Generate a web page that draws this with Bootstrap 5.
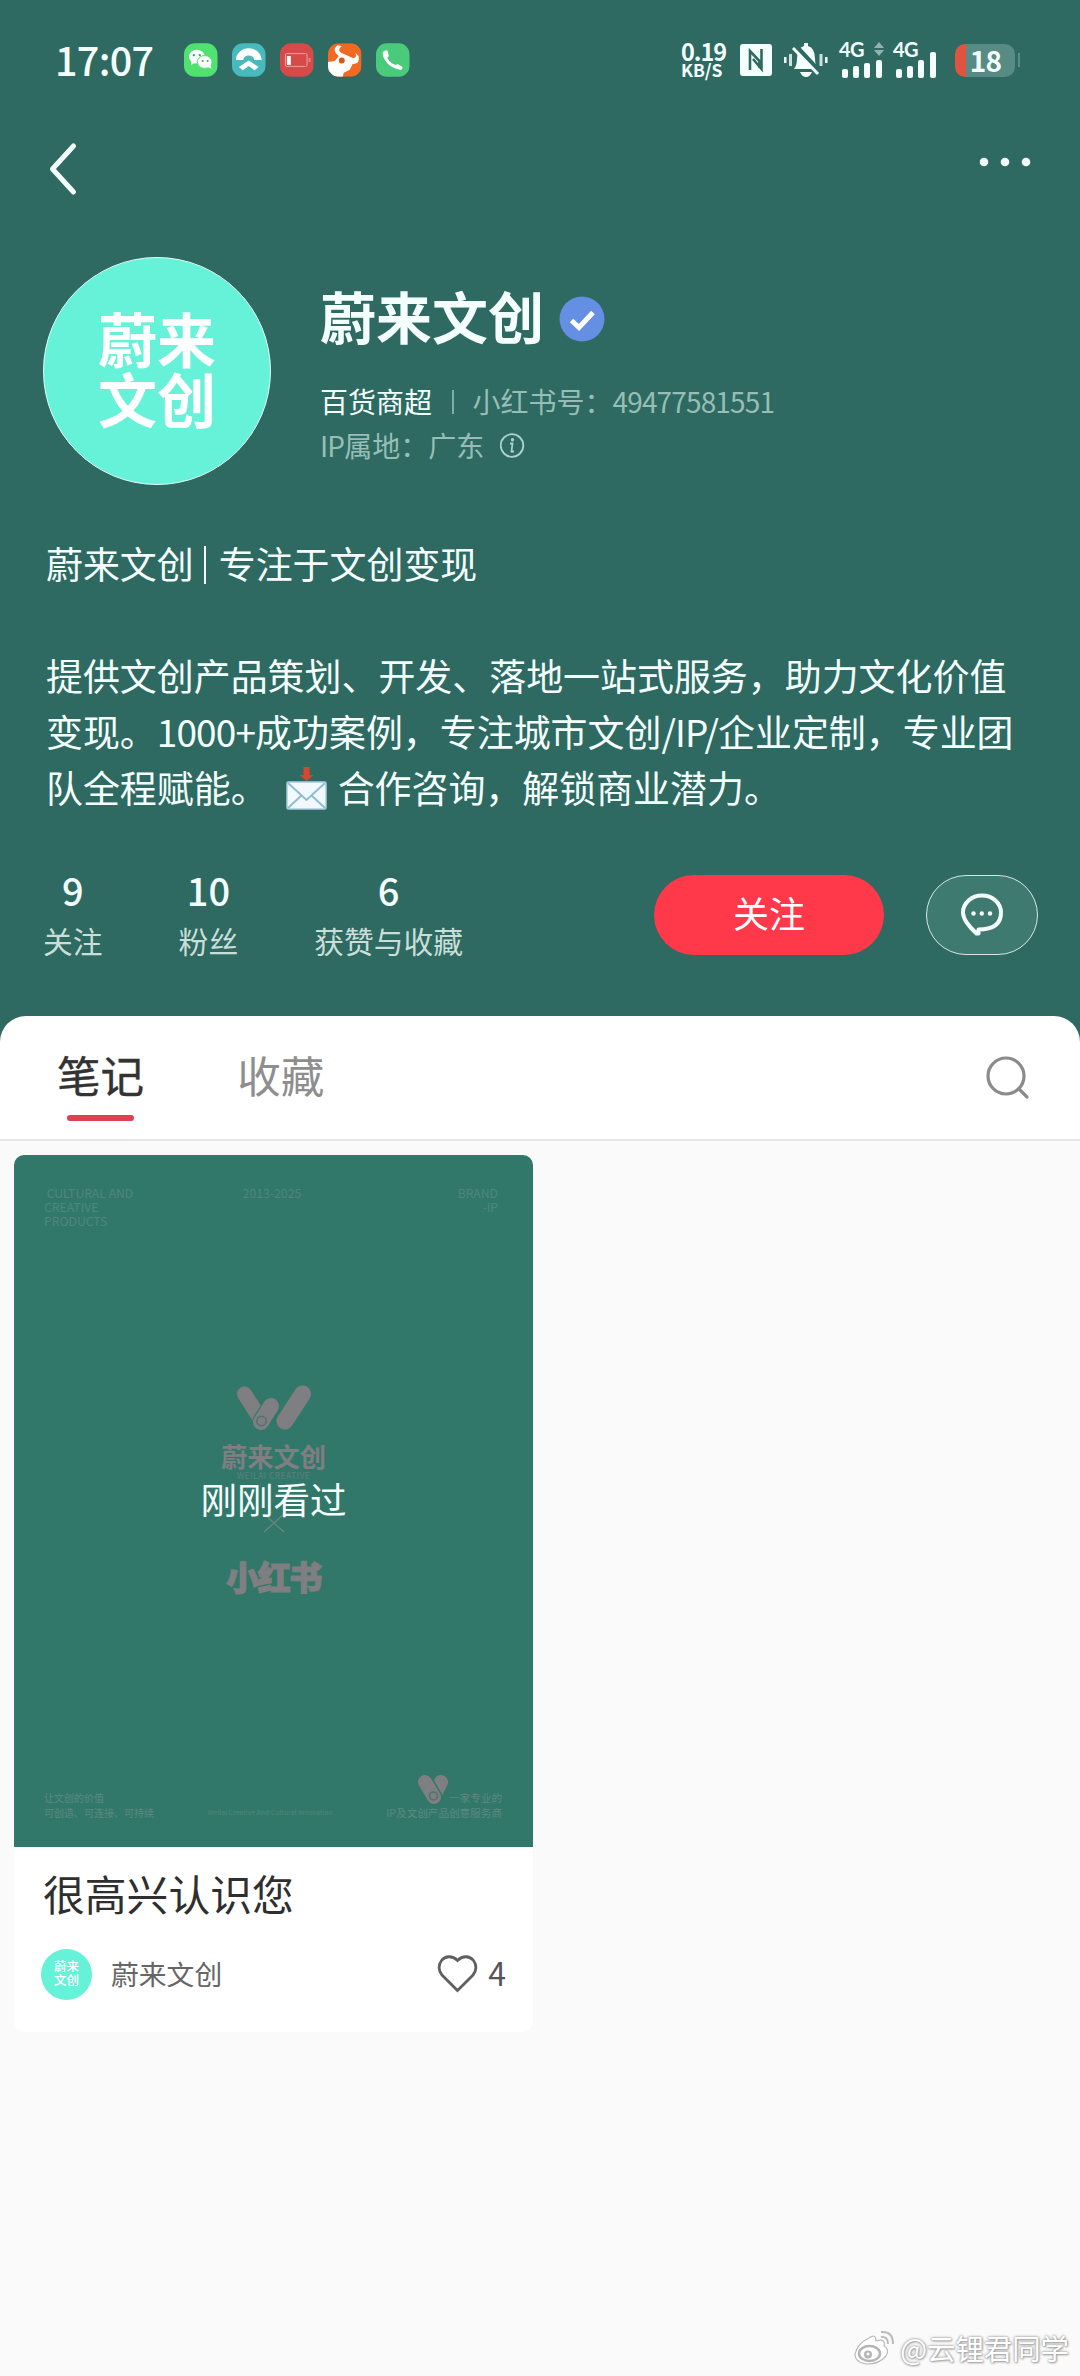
<!DOCTYPE html>
<html lang="zh-CN">
<head>
<meta charset="utf-8">
<meta name="viewport" content="width=device-width, initial-scale=1">
<title>蔚来文创</title>
<link href="https://cdn.jsdelivr.net/npm/bootstrap@5.3.0/dist/css/bootstrap.min.css" rel="stylesheet">
<style>
body{font-family:"Noto Sans CJK SC",sans-serif;background:#fbfafb;color:#333;min-height:2376px;position:relative}
svg{display:block;flex:none}
.hero{background:#2e6a61;color:#f4fffd;height:1046px}
.statusbar{height:120px;padding:0 60px 0 55px}
.clock{font-size:39.5px;font-weight:500;line-height:40px;width:129px;white-space:nowrap;letter-spacing:-.7px;padding-bottom:2px}
.appicons{gap:14.5px}
.rate{font-size:23.5px;font-weight:700;line-height:20px;letter-spacing:-1px;width:46px;margin-right:13px}
.rate span{display:block;font-size:17.5px;line-height:18px;letter-spacing:-.1px}
.bell{margin:0 6px 0 7px}
.sig{width:46px;height:36px;font-family:Lato,"Noto Sans CJK SC",sans-serif;font-weight:700;font-size:20px;line-height:14px;letter-spacing:-.5px}
.batt{width:60px;height:33px;border-radius:10px;background:linear-gradient(90deg,#df5340 11px,#588b83 11px);font-weight:700;font-size:28px;line-height:32px;letter-spacing:-.8px;padding-left:1px}
.nub{width:2px;height:14px;background:#588b83;margin-left:3px}
.topnav{height:97px;padding:22px 49px 0 48px}
.profile{padding:40px 43px 0;height:268px}
.avatar{border-radius:50%;background:#66f1d9;color:#fff;font-weight:900;text-align:center;flex:none}
.avatar-lg{width:228px;height:228px;border:1.5px solid #e4fffa;font-size:59px;line-height:60px;padding-top:50px;font-weight:700}
.avatar-sm{width:51px;height:51px;font-size:12.5px;line-height:14px;padding-top:10.5px;font-weight:500}
.idblock{margin-left:49px}
.uname{font-size:56px;font-weight:700;line-height:60px;margin:0}
.verified{margin:7px 0 0 15px}
.meta{font-size:28px;line-height:43.5px;color:#96beb6;margin-top:35px}
.meta .cat{color:#f4fffd}
.vbar{width:1.5px;height:24px;background:#7fada5;margin:0 19px 0 20px}
.uid{letter-spacing:-.85px}
.bio{font-size:36.95px;line-height:56px;padding:50px 46px 0;height:390px;white-space:nowrap}
.bio .vbar2{display:inline-block;width:2px;height:38px;background:#f4fffd;margin:0 13px 0 10px;vertical-align:-5px}
.nums{letter-spacing:-.85px}
.mail{display:inline-block;vertical-align:-7px;margin:0 11px 0 18px}
.statrow{height:80px;padding:0 42px 0 43px}
.stats{gap:76px}
.stat{text-align:center;font-size:29.8px;line-height:40px;color:#c9ded9}
.stat b{display:block;font-weight:500;font-size:38px;line-height:40px;color:#f4fffd;margin-top:-5px;margin-bottom:10px}
.follow{width:230px;height:80px;border-radius:40px;background:#ff384a;color:#fff;font-size:36px;border:0;padding:0 0 6px;margin-right:42px}
.msg{width:112px;height:80px;border-radius:40px;border:1.5px solid #d5e8e4;background:#3f7a70;padding:0}
.sheet{background:#fff;border-radius:26px 26px 0 0;margin-top:-30px;height:125px;border-bottom:2px solid #e6e6e6;padding:0 49px 0 57px;position:relative}
.tabitem{font-size:43.6px;line-height:60px;color:#8e8e8e;height:80px;margin-top:28px;text-align:center}
.tabitem.on{color:#333;margin-right:93px;-webkit-text-stroke:.4px #333}
.tabitem.on::after{content:"";display:block;width:67px;height:6px;border-radius:3px;background:#e0404f;margin:11px auto 0}
.note{width:519px;margin:14px 0 0 14px;border:0;border-radius:10px;overflow:hidden;background:#fff}
.cover{height:692px;background:#31786b;color:#4f877c;font-size:12.2px;line-height:14px;padding:31px 35px 27px 30px;position:relative}
.coverhead>div{flex:1 1 0}
.coverhead>.art-year{position:relative;left:1px}
.brandmark{color:#7f7e81;padding-top:157px;margin-right:-5px}
.brandname{font-weight:700;font-size:26.3px;line-height:26px;margin-top:12px}
.brandsub{font-size:8.4px;line-height:9px;letter-spacing:.5px;color:#5c817b;margin-top:2px}
.xmark{margin-top:33px}
.xhs{font-weight:900;font-size:33px;line-height:40px;letter-spacing:-1.5px;margin-top:23px;-webkit-text-stroke:1.2px #7f7e81}
.seen{position:absolute;left:0;right:0;top:324px;text-align:center;color:#f6fffe;font-size:36.5px;line-height:40px}
.foot{font-size:10.6px;line-height:15px;color:#5d8981;margin-right:-4px}
.foot-l{font-size:10px}
.foot-c{font-size:6.8px;letter-spacing:.05px;color:#548378}
.ntitle{font-size:41.8px;line-height:60px;color:#2f2f2f;margin:16px 0 0 29px}
.nfoot{padding:0 27px 0 27px;height:52px;margin-top:25px}
.nname{font-size:27.8px;color:#666;margin:-2px 0 0 19px;line-height:40px}
.likes{font-size:32px;color:#555;line-height:40px;margin:-4px 0 0 10px}
.wm{position:absolute;right:11px;bottom:10px;color:#fff;font-size:28.4px;line-height:34px;text-shadow:0 0 2px #999,0 0 3px #aaa,1px 1px 2px #aaa}
</style>
</head>
<body>
<header class="hero">
  <div class="statusbar d-flex align-items-center">
    <div class="clock">17:07</div>
    <div class="appicons d-flex">
      <svg width="33.5" height="34" viewBox="0 0 34 34"><rect width="34" height="34" rx="11" fill="#50e170"/><ellipse cx="13" cy="13.500" rx="8" ry="7" fill="#fff"/><path d="M8 18l-1 4 4-2z" fill="#fff"/><ellipse cx="21" cy="19" rx="7.500" ry="6.500" fill="#fff" stroke="#50e170"/><path d="M24 24l4 2-1-4z" fill="#fff"/><g fill="#35a955"><circle cx="10" cy="12" r="1.200"/><circle cx="16" cy="12" r="1.200"/><circle cx="19" cy="18" r="1"/><circle cx="24" cy="18" r="1"/></g></svg>
      <svg width="33.5" height="34" viewBox="0 0 34 34"><rect width="34" height="34" rx="11" fill="#48b9bd"/><path d="M4 17a13 12 0 0 1 26 0h-7.500a5.500 4.500 0 0 0-11 0z" fill="#fff"/><path d="M17 17.500L27 24l-4 3.500-6-4.500-6 4.500L7 24z" fill="#fff"/></svg>
      <svg width="33.5" height="34" viewBox="0 0 34 34"><rect width="34" height="34" rx="11" fill="#d64a4a"/><rect x="5.500" y="10.500" width="22" height="13" rx="1.500" fill="none" stroke="#f4a09a"/><rect x="7" y="13" width="4" height="9" fill="#fff"/><rect x="29" y="15" width="2" height="4" fill="#e98782"/></svg>
      <svg width="33.5" height="34" viewBox="0 0 34 34"><defs><clipPath id="oxclip"><rect width="34" height="34" rx="11"/></clipPath></defs><g clip-path="url(#oxclip)"><rect width="34" height="34" fill="#f26a22"/><path d="M0 19L7 18 11 13C6 9 5 5 10 2L14 3C10 6 11 8 14 10L25 15C28 15 29 14 28 10L31 13C32 19 30 21 25 21L22 27 16 30 15 34H0z" fill="#fff"/><circle cx="14" cy="17.500" r="3" fill="#d65716"/></g></svg>
      <svg width="33.5" height="34" viewBox="0 0 34 34"><rect width="34" height="34" rx="11" fill="#4acb7b"/><path d="M7 9Q10 6 12 8L13 13 11.500 15Q15 21 20 22L22 21 27 24Q27 27 24 27Q14 25 9 17Q6 12 7 9z" fill="#fff"/></svg>
    </div>
    <div class="ms-auto d-flex align-items-center">
      <div class="rate">0.19<span>KB/S</span></div>
      <svg width="32" height="32" viewBox="0 0 32 32"><rect width="32" height="32" rx="3" fill="#f4fffd"/><path d="M10 26V7L19.500 17V24M21.500 5v20L13 15" fill="none" stroke="#2e6a61" stroke-width="2.600"/></svg>
      <svg class="bell" width="54" height="36" viewBox="-5 0 54 36"><g fill="#f4fffd"><path d="M10 27Q13 23 13 17Q13 6 20 4V1h4V4Q31 6 31 17Q31 23 34 27z"/><path d="M16 30h12q-2 5-6 5t-6-5z"/><rect x="0" y="15" width="2.500" height="6"/><rect x="5" y="12" width="3" height="12" opacity=".8"/><rect x="35.500" y="12" width="3" height="12" opacity=".8"/><rect x="41" y="15" width="2.500" height="6"/></g><path d="M12 5L36 31" stroke="#2e6a61" stroke-width="6"/><path d="M9 6L34 32" stroke="#f4fffd" stroke-width="3"/></svg>
      <div class="sig position-relative">4G
        <svg class="position-absolute top-0 end-0" width="12" height="14" viewBox="1 0 12 14"><path d="M2 6L7 0l5 6zM2 8l5 6 5-6z" fill="#8db5ae"/></svg>
        <svg class="position-absolute bottom-0 start-0" width="44" height="20" viewBox="-2 0 44 20" fill="#f4fffd"><rect x="1" y="11" width="6" height="9" rx="2"/><rect x="12" y="8" width="6" height="12" rx="2"/><rect x="23" y="5" width="6" height="15" rx="2"/><rect x="35" y="2" width="6" height="18" rx="2"/></svg>
      </div>
      <div class="sig position-relative ms-2">4G
        <svg class="position-absolute bottom-0 start-0" width="46" height="28" viewBox="-2 0 46 28" fill="#f4fffd"><rect x="1" y="19" width="6" height="9" rx="2"/><rect x="12" y="16" width="6" height="12" rx="2"/><rect x="23" y="10" width="6" height="18" rx="2"/><rect x="35" y="2" width="6" height="26" rx="2"/></svg>
      </div>
      <div class="batt ms-3 text-center">18</div><div class="nub"></div>
    </div>
  </div>
  <div class="topnav d-flex justify-content-between">
    <svg width="30" height="54" viewBox="0 0 30 54"><path d="M25.500 4L4.500 27 25.500 50" fill="none" stroke="#f4fffd" stroke-width="5" stroke-linecap="round" stroke-linejoin="round"/></svg>
    <svg width="54" height="40" viewBox="0 0 54 40" fill="#f4fffd"><circle cx="7" cy="20" r="4.300"/><circle cx="28" cy="20" r="4.300"/><circle cx="49" cy="20" r="4.300"/></svg>
  </div>
  <div class="profile d-flex">
    <div class="avatar avatar-lg">蔚来<br>文创</div>
    <div class="idblock pt-4">
      <div class="d-flex align-items-center pt-1">
        <h1 class="uname">蔚来文创</h1>
        <svg class="verified" width="46" height="46" viewBox="0 0 46 46"><circle cx="23" cy="23" r="22.500" fill="#658fe2"/><path d="M12.500 24.500L20 31.500 34 16.500" fill="none" stroke="#fff" stroke-width="5"/></svg>
      </div>
      <div class="meta">
        <div class="d-flex align-items-center"><span class="cat">百货商超</span><span class="vbar"></span><span>小红书号：</span><span class="uid">49477581551</span></div>
        <div class="d-flex align-items-center"><span class="uid">IP</span><span>属地：广东</span>
          <svg class="ms-3" width="26" height="26" viewBox="2.500 -1 26 26" fill="none" stroke="#a9d3cb" stroke-width="1.800"><circle cx="14.500" cy="12.500" r="11.300"/><path d="M12.500 10.500h2.500l-1 8h2.500"/><circle cx="15" cy="6.800" r=".8" fill="#a9d3cb"/></svg></div>
      </div>
    </div>
  </div>
  <div class="bio">蔚来文创<span class="vbar2"></span>专注于文创变现<br><br>提供文创产品策划、开发、落地一站式服务，助力文化价值<br>变现。<span class="nums">1000+</span>成功案例，专注城市文创<span class="nums">/IP/</span>企业定制，专业团<br>队全程赋能。<svg class="mail" width="41" height="43" viewBox="0 0 41 43"><rect x="1" y="15" width="39" height="27" rx="1.500" fill="#f1f9fe" stroke="#a9cde4" stroke-width="1.500"/><path d="M2 41L16 28M39 41L25 28M2 16L20.500 33 39 16" fill="none" stroke="#91bcd6" stroke-width="2"/><path d="M17.500 0h6v8h4L20.500 14 13.500 8h4z" fill="#d9452f"/></svg>合作咨询，解锁商业潜力。</div>
  <div class="statrow d-flex">
    <div class="stats d-flex">
      <div class="stat"><b>9</b>关注</div>
      <div class="stat"><b>10</b>粉丝</div>
      <div class="stat"><b>6</b>获赞与收藏</div>
    </div>
    <button class="btn follow ms-auto">关注</button>
    <button class="btn msg d-flex align-items-center justify-content-center"><svg width="44" height="44" viewBox="0 0 44 44"><path d="M18.500 40.500H16.500Q3 28 3 19.500A19 17 0 0 1 41 19.500Q41 36.500 18.500 36.500Z" fill="none" stroke="#f4fffd" stroke-width="4" stroke-linejoin="round"/><g fill="#f4fffd"><circle cx="13.500" cy="20.500" r="2.200"/><circle cx="21.800" cy="20.500" r="2.200"/><circle cx="30" cy="20.500" r="2.200"/></g></svg></button>
  </div>
</header>
<nav class="sheet d-flex">
  <div class="tabitem on">笔记</div>
  <div class="tabitem">收藏</div>
  <svg class="ms-auto align-self-center" width="46" height="46" viewBox="0 0 46 46" fill="none" stroke="#8b8b8b" stroke-width="3.200" stroke-linecap="round"><circle cx="21" cy="21" r="18"/><path d="M34 34l8 8"/></svg>
</nav>
<main>
  <article class="card note">
    <div class="cover d-flex flex-column">
      <div class="coverhead d-flex">
        <div>&nbsp;CULTURAL AND<br>CREATIVE<br>PRODUCTS</div><div class="art-year text-center">2013-2025</div><div class="text-end">BRAND<br>-IP</div>
      </div>
      <div class="brandmark d-flex flex-column align-items-center">
        <svg width="76" height="46" viewBox="0 0 76 46"><g stroke="#7f7e81" stroke-linecap="round"><path d="M8.500 9L25 35" stroke-width="15"/><path d="M66.500 9L49 36" stroke-width="17"/><path d="M35 21L25 37" stroke="#31786b" stroke-width="18"/><path d="M35 21L25 37" stroke-width="16"/></g><circle cx="25.500" cy="36" r="4.700" fill="none" stroke="#4d746e" stroke-width="1.500"/></svg>
        <div class="brandname">蔚来文创</div>
        <div class="brandsub">WEILAI CREATIVE</div>
        <svg class="xmark" width="22" height="20" viewBox="0 0 22 20"><path d="M1 1l20 18M21 1L1 19" stroke="#6d8581" stroke-width="1.200"/></svg>
        <div class="xhs">小红书</div>
      </div>
      <div class="foot d-flex justify-content-between align-items-end mt-auto">
        <div class="foot-l">让文创的价值<br>可创造、可连接、可持续</div>
        <div class="foot-c">Weilai Creative And Cultural Innovation</div>
        <div class="text-end"><div class="d-flex align-items-end justify-content-end"><svg width="32" height="31" viewBox="0 0 32 31"><path d="M24 8L17 22" stroke="#7f7e81" stroke-width="14" stroke-linecap="round"/><path d="M8 8L17 23" stroke="#31786b" stroke-width="17" stroke-linecap="round"/><path d="M8 8L17 23" stroke="#7f7e81" stroke-width="14" stroke-linecap="round"/><circle cx="16.500" cy="22" r="4" fill="none" stroke="#4d746e" stroke-width="1.500"/></svg><span>一家专业的</span></div>IP及文创产品创意服务商</div>
      </div>
      <div class="seen">刚刚看过</div>
    </div>
    <div class="ntitle">很高兴认识您</div>
    <div class="nfoot d-flex align-items-center">
      <div class="avatar avatar-sm">蔚来<br>文创</div>
      <div class="nname">蔚来文创</div>
      <svg class="ms-auto" width="41" height="38" viewBox="0 0 41 38"><path d="M20.500 5.500C15 0 8 1 4.500 5.500C1 10 1.500 16 5 20L20.500 35.500 36 20C39.500 16 40 10 36.500 5.500C33 1 26 0 20.500 5.500z" fill="none" stroke="#606060" stroke-width="2.800"/></svg>
      <div class="likes">4</div>
    </div>
    <div class="pb-4 pt-2"></div>
  </article>
</main>
<div class="wm d-flex align-items-center"><svg width="46" height="36" viewBox="0 0 46 36"><path d="M15 8Q22 3 22 11Q32 8 30 16Q36 19 32 26Q25 34 14 34Q1 33 1 24Q3 14 15 8z" fill="#fff" stroke="#bbb" stroke-width="1.200"/><ellipse cx="15.500" cy="23.500" rx="10.500" ry="7.500" fill="#fff" stroke="#b5b5b5" stroke-width="2.500"/><circle cx="14" cy="24.500" r="4" fill="#b5b5b5"/><circle cx="14" cy="24" r="1.500" fill="#fff"/><path d="M27 7q7-1 7 7M27 2q12-1 12 12" fill="none" stroke="#bbb" stroke-width="2"/></svg>@云锂君同学</div>
<script src="https://cdn.jsdelivr.net/npm/bootstrap@5.3.0/dist/js/bootstrap.bundle.min.js"></script>
</body>
</html>
